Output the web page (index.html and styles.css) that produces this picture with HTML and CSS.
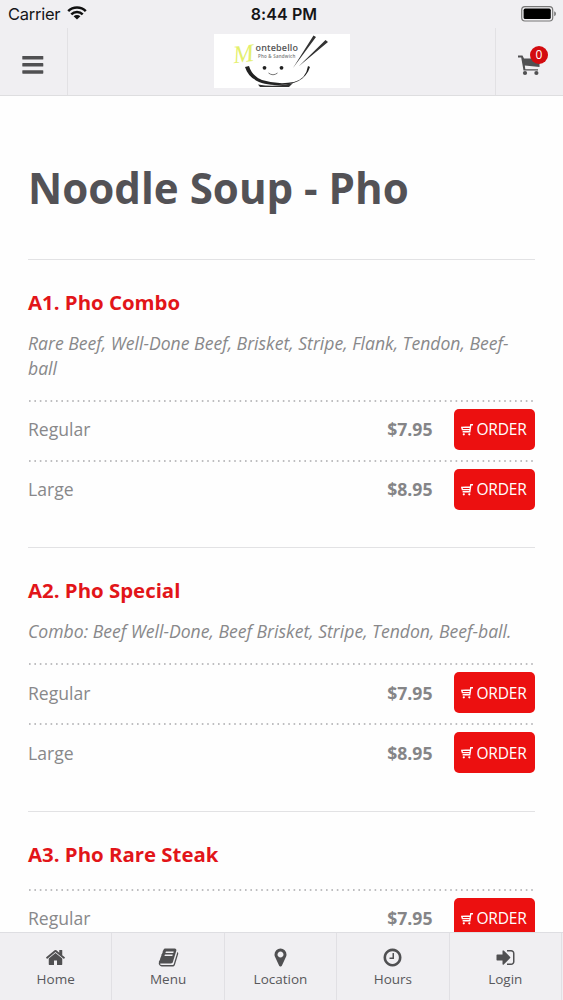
FILE: index.html
```html
<!DOCTYPE html>
<html lang="en">
<head>
<meta charset="utf-8">
<title>Noodle Soup - Pho</title>
<link rel="stylesheet" href="styles.css">
</head>
<body>
<svg class="defs" width="0" height="0">
  <symbol id="order-cart" viewBox="0 0 12 13">
    <path d="M12 1.700H9.800L8.800 8.800H1.600M9.300 4L.8 4.300 1.400 6.600H8.800" fill="none" stroke="currentColor" stroke-width="1.400"/>
    <circle cx="2.800" cy="11.300" r="1.100" fill="currentColor"/><circle cx="8.300" cy="11.300" r="1.100" fill="currentColor"/>
  </symbol>
</svg>
<div class="app">
  <div class="status">
    <div class="carrier">Carrier
      <svg class="wifi" viewBox="0 0 20 14" width="20" height="14"><g fill="none" stroke="#111" stroke-width="2.5"><path d="M1.2 5.1a12.5 12.5 0 0 1 17.6 0"/><path d="M4.3 8.4a8 8 0 0 1 11.4 0"/></g><path d="M10 13.6 6.6 10.3a4.8 4.8 0 0 1 6.8 0z" fill="#111"/></svg>
    </div>
    <div class="time">8:44 PM</div>
    <svg class="battery" viewBox="0 0 36 16" width="36" height="16"><rect x=".7" y=".7" width="31" height="14.3" rx="3.2" fill="none" stroke="#777" stroke-width="1.2"/><rect x="2.6" y="2.6" width="27.2" height="10.5" rx="1.6" fill="#000"/><path d="M33.2 5.3q1.8.6 1.8 2.5t-1.8 2.5z" fill="#777"/></svg>
  </div>
  <header class="header">
    <div class="side left"><svg width="22" height="18" viewBox="0 0 22 18" fill="#505052"><rect x=".3" y="0" width="21" height="3.5" rx=".6"/><rect x=".3" y="7.1" width="21" height="3.5" rx=".6"/><rect x=".3" y="14.2" width="21" height="3.5" rx=".6"/></svg></div>
    <div class="brand">
      <svg class="logo" width="136" height="54" viewBox="0 0 136 54">
        <rect width="136" height="54" fill="#fff"/>
        <text class="logo-m" x="19" y="28" transform="rotate(-7 30 20)">M</text>
        <text class="logo-name" x="41.500" y="16.500">ontebello</text>
        <text class="logo-sub" x="44" y="23.500">Pho &amp; Sandwich</text>
        <path d="M31 33C35 46 48 51 64 51S92 46 96 33L94 32Q92 45 80 48 64 51 48 46 38 42 35 32z" fill="#222"/>
        <path d="M44 50.500Q62 53.500 79 49L75 53H46z" fill="#333"/>
        <circle cx="50.5" cy="33.8" r="1.9" fill="#222"/><circle cx="67.5" cy="33.8" r="1.9" fill="#222"/>
        <path d="M54.5 39Q59 42.500 63.5 39" fill="none" stroke="#777"/>
        <path d="M99.5 1.500 102 3 79 34zM111.500 6 114 8 84.500 32.500z" fill="#333"/>
      </svg>
    </div>
    <div class="side right">
      <div class="cart">
        <svg width="23" height="21" viewBox="0 0 23 21"><path d="M0 .5H4.500L6 3.500H21.500V12L6.800 10.500 7.300 14.200H20V15.600H5.500L4.800 11.500 3.200 2.400H0z" fill="#505052"/><circle cx="7" cy="18" r="2.1" fill="#505052"/><circle cx="18.400" cy="18" r="2.1" fill="#505052"/></svg>
        <span class="badge">0</span>
      </div>
    </div>
  </header>
  <main class="content">
    <h1>Noodle Soup - Pho</h1>
    <section class="item">
      <h2>A1. Pho Combo</h2>
      <p>Rare Beef, Well-Done Beef, Brisket, Stripe, Flank, Tendon, Beef-ball</p>
      <div class="row"><svg class="dots"><line x1="1" y1="1" x2="506" y2="1"/></svg><span>Regular</span><b>$7.95</b><button><svg><use href="#order-cart"/></svg>ORDER</button></div>
      <div class="row"><svg class="dots"><line x1="1" y1="1" x2="506" y2="1"/></svg><span>Large</span><b>$8.95</b><button><svg><use href="#order-cart"/></svg>ORDER</button></div>
    </section>
    <section class="item">
      <h2>A2. Pho Special</h2>
      <p>Combo: Beef Well-Done, Beef Brisket, Stripe, Tendon, Beef-ball.</p>
      <div class="row"><svg class="dots"><line x1="1" y1="1" x2="506" y2="1"/></svg><span>Regular</span><b>$7.95</b><button><svg><use href="#order-cart"/></svg>ORDER</button></div>
      <div class="row"><svg class="dots"><line x1="1" y1="1" x2="506" y2="1"/></svg><span>Large</span><b>$8.95</b><button><svg><use href="#order-cart"/></svg>ORDER</button></div>
    </section>
    <section class="item">
      <h2>A3. Pho Rare Steak</h2>
      <div class="row"><svg class="dots"><line x1="1" y1="1" x2="506" y2="1"/></svg><span>Regular</span><b>$7.95</b><button><svg><use href="#order-cart"/></svg>ORDER</button></div>
    </section>
  </main>
  <nav class="tabs">
    <a><svg viewBox="0 0 1792 1792"><path d="M1472 992v480q0 26-19 45t-45 19h-384v-384h-256v384h-384q-26 0-45-19t-19-45v-480q0-1 .5-3t.5-3l575-474 575 474q1 2 1 6zm223-69l-62 74q-8 9-21 11h-3q-13 0-21-7l-692-577-692 577q-12 8-24 7-13-2-21-11l-62-74q-8-10-7-23.500t11-21.500l719-599q32-26 76-26t76 26l244 204v-195q0-14 9-23t23-9h192q14 0 23 9t9 23v408l219 182q10 8 11 21.500t-7 23.500z"/></svg>Home</a>
    <a><svg viewBox="0 0 1792 1792"><path d="M1703 478q40 57 18 129l-275 906q-19 64-76.500 107.500t-122.500 43.500h-923q-77 0-148.500-53.500t-99.500-131.500q-24-67-2-127 0-4 3-27t4-37q1-8-3-21.500t-3-19.500q2-11 8-21t16.500-23.500 16.500-23.500q23-38 45-91.500t30-91.500q3-10 .5-30t-.5-28q3-11 17-28t17-23q21-36 42-92t25-90q1-9-2.500-32t.5-28q4-13 22-30.500t22-22.500q19-26 42.500-84.500t27.500-96.500q1-8-3-25.500t-2-26.500q2-8 9-18t18-23 17-21q8-12 16.500-30.500t15-35 16-36 19.500-32 26.500-23.500 36-11.500 47.500 5.500l-1 3q38-9 51-9h761q74 0 114 56t18 130l-274 906q-36 119-71.500 153.500t-128.500 34.500h-869q-27 0-38 15-11 16-1 43 24 70 144 70h923q29 0 56-15.500t35-41.500l300-987q7-22 5-57 38 15 59 43zm-1064 2q-4 13 2 22.500t20 9.500h608q13 0 25.500-9.500t16.500-22.500l21-64q4-13-2-22.500t-20-9.500h-608q-13 0-25.500 9.500t-16.500 22.500zm-83 256q-4 13 2 22.500t20 9.500h608q13 0 25.500-9.500t16.500-22.500l21-64q4-13-2-22.500t-20-9.500h-608q-13 0-25.500 9.500t-16.500 22.500z"/></svg>Menu</a>
    <a><svg viewBox="0 0 1792 1792"><path d="M1152 640q0-106-75-181t-181-75-181 75-75 181 75 181 181 75 181-75 75-181zm256 0q0 109-33 179l-364 774q-16 33-47.500 52t-67.500 19-67.500-19-46.500-52l-365-774q-33-70-33-179 0-212 150-362t362-150 362 150 150 362z"/></svg>Location</a>
    <a><svg viewBox="0 0 1792 1792"><path d="M1024 544v448q0 14-9 23t-23 9h-320q-14 0-23-9t-9-23v-64q0-14 9-23t23-9h224v-352q0-14 9-23t23-9h64q14 0 23 9t9 23zm416 352q0-148-73-273t-198-198-273-73-273 73-198 198-73 273 73 273 198 198 273 73 273-73 198-198 73-273zm224 0q0 209-103 385.500t-279.500 279.500-385.500 103-385.500-103-279.500-279.500-103-385.500 103-385.500 279.500-279.500 385.500-103 385.500 103 279.500 279.500 103 385.500z"/></svg>Hours</a>
    <a><svg viewBox="0 0 1792 1792"><path d="M1312 896q0 26-19 45l-544 544q-19 19-45 19t-45-19-19-45v-288h-448q-26 0-45-19t-19-45v-384q0-26 19-45t45-19h448v-288q0-26 19-45t45-19 45 19l544 544q19 19 19 45zm352-352v704q0 119-84.500 203.500t-203.500 84.500h-320q-13 0-22.500-9.500t-9.500-22.500q0-4-1-20t-.5-26.500 3-23.500 10-19.500 20.500-6.500h320q66 0 113-47t47-113v-704q0-66-47-113t-113-47h-312l-11.500-1-11.500-3-8-5.500-7-9-2-13.500q0-4-1-20t-.5-26.500 3-23.500 10-19.500 20.500-6.500h320q119 0 203.500 84.500t84.500 203.500z"/></svg>Login</a>
  </nav>
</div>
</body>
</html>
```

FILE: styles.css
```css
* { box-sizing: border-box; }
body { margin: 0; background: #fefefe; font-family: "Open Sans", sans-serif; color: #88888a; }
.defs { position: absolute; }
.app { height: 1000px; display: flex; flex-direction: column; overflow: hidden; }
.status { flex: none; height: 28px; background: #f0eff2; display: grid; grid-template-columns: 1fr auto 1fr; align-items: center; padding: 0 6px 0 8px; font: 17px/28px Inter, sans-serif; color: #151517; }
.carrier { display: flex; align-items: center; gap: 7px; font-size: 16.5px; letter-spacing: -.25px; }
.wifi { margin-top: -2px; }
.time { font-size: 16px; font-weight: 600; letter-spacing: .1px; padding-left: 3px; }
.battery { justify-self: end; margin-top: -1px; }
.header { flex: none; height: 68px; background: #f0eff2; border-bottom: 1px solid #dedee0; display: flex; }
.side { width: 68px; display: flex; align-items: center; }
.left { border-right: 1px solid #e2e1e4; padding: 6px 0 0 22px; }
.right { border-left: 1px solid #e2e1e4; padding: 0 0 0 22px; }
.brand { flex: 1; display: flex; justify-content: center; padding-top: 6px; }
.logo-m { font: italic 25px "Liberation Serif", serif; fill: #e4ef6c; }
.logo-name { font: 600 9px "Open Sans", sans-serif; letter-spacing: .15px; fill: #555; }
.logo-sub { font: 600 4.500px "Open Sans", sans-serif; letter-spacing: .2px; fill: #777; }
.cart { position: relative; height: 21px; margin-top: 8px; }
.badge { position: absolute; left: 12px; top: -9px; width: 18px; height: 18px; border-radius: 50%; background: #d30b10; color: #fff; font-size: 12px; line-height: 18px; text-align: center; }
.content { flex: 1; min-height: 0; overflow: hidden; padding: 0 28px; }
h1 { margin: 0; height: 163px; padding-top: 64px; font-size: 42.100px; line-height: 56px; font-weight: 700; color: #535256; white-space: nowrap; }
.item { border-top: 1px solid #e2e2e4; padding-top: 29px; padding-bottom: 27.500px; }
h2 { margin: 0; font-size: 20.400px; line-height: 27px; font-weight: 700; color: #e21519; }
.item p { margin: 15px 0 19.500px; padding-right: 15px; font-size: 17.600px; line-height: 24.500px; font-style: italic; }
h2 + .row { margin-top: 21px; }
.row { position: relative; height: 60px; padding-bottom: 1px; display: flex; align-items: center; font-size: 17.600px; }
.row b { margin-left: auto; margin-right: 21.500px; color: #858587; }
.dots { position: absolute; top: 0; left: 0; width: 507px; height: 2px; }
.dots line { stroke: #a9a9ac; stroke-width: 1.5; stroke-dasharray: 1.6 3.8; }
button { width: 81px; height: 41px; border: 0; padding: 0 1px 0 0; border-radius: 5px; background: #ec1010; color: #fff; font: 15.500px "Open Sans", sans-serif; letter-spacing: -.2px; display: flex; align-items: center; justify-content: center; gap: 3px; }
button svg { width: 12px; height: 13px; }
.tabs { flex: none; height: 68px; background: #f0eff2; border-top: 1px solid #dedee2; display: grid; grid-template-columns: repeat(5, 1fr); padding-right: 1px; }
.tabs a { border-right: 1px solid #e1e0e4; display: flex; flex-direction: column; align-items: center; padding-top: 14px; font-size: 13.500px; line-height: 20px; color: #58585b; }
.tabs svg { width: 21px; height: 21px; margin-bottom: 1px; fill: #505052; }
```
